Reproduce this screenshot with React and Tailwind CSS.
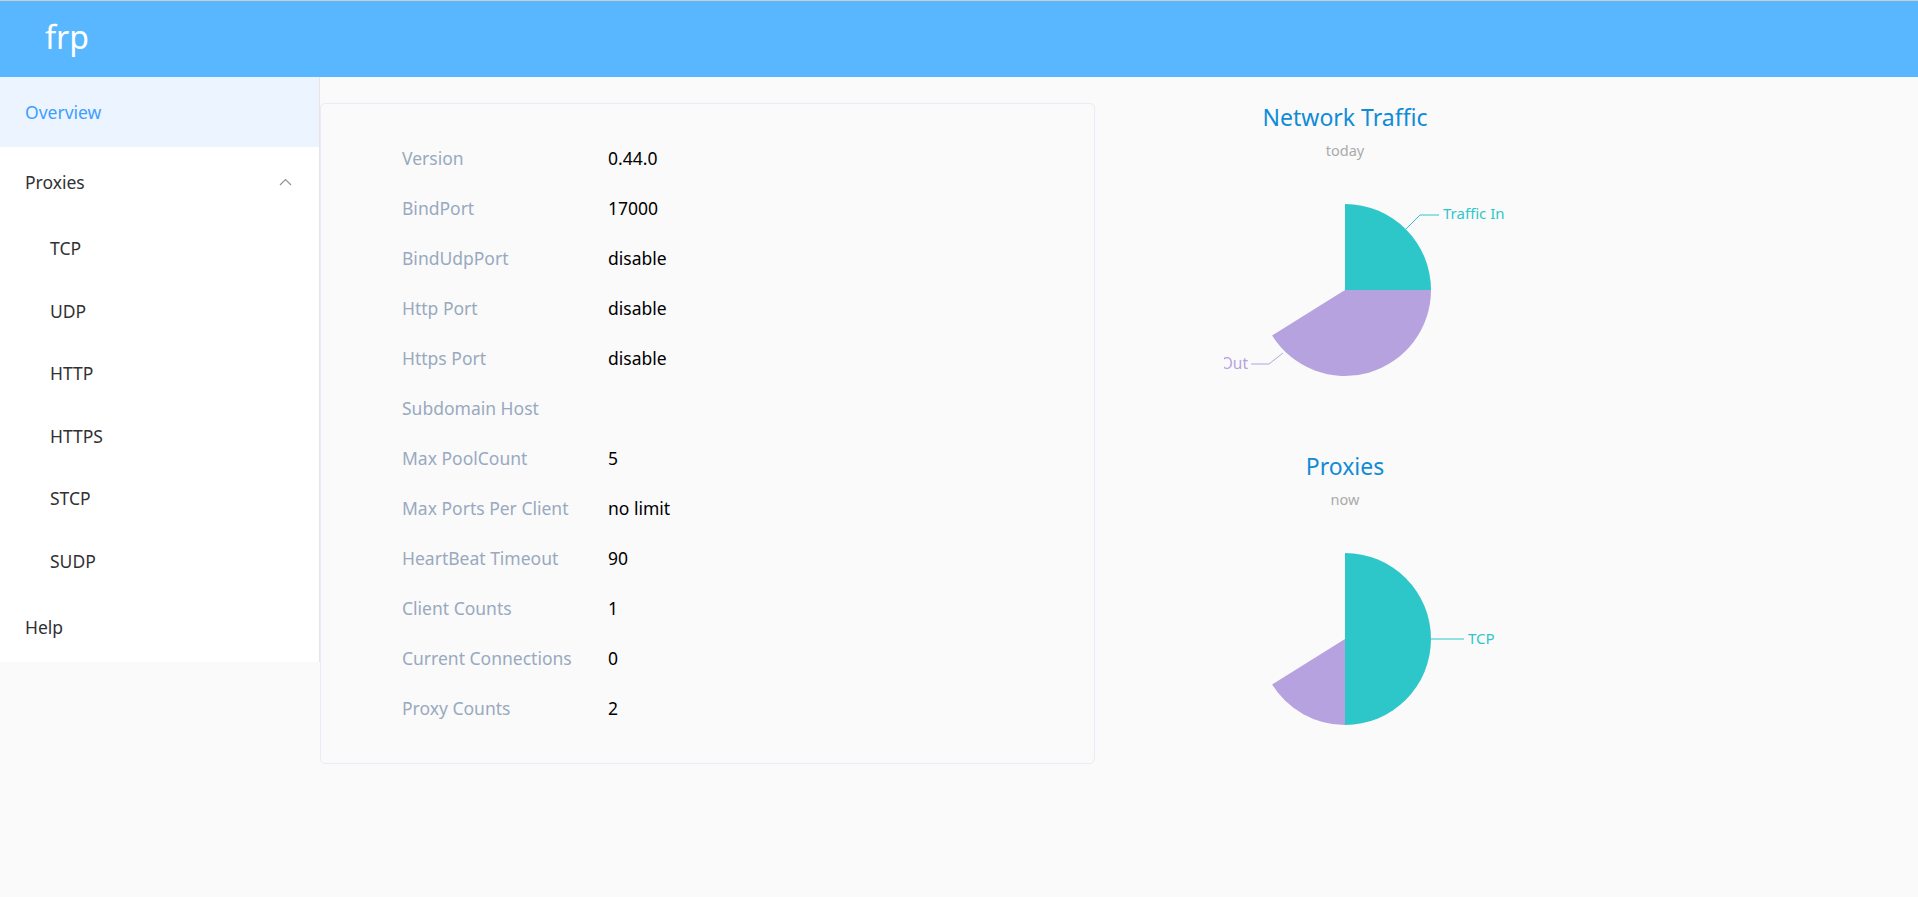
import React from 'react';

const font = "font-['Noto_Sans',sans-serif]";

// Sidebar menu
function Sidebar() {
    const subItems = ['TCP', 'UDP', 'HTTP', 'HTTPS', 'STCP', 'SUDP'];
    return (
        <aside className="w-[320px] shrink-0 self-start bg-white border-r border-[#e6e6e6] text-[17.5px] text-[#303133]">
            <div className="h-[70px] flex items-center pl-[25px] bg-[#ecf5ff] text-[#409eff]">Overview</div>
            <div className="h-[70px] flex items-center justify-between pl-[25px] pr-[27px]">
                <span>Proxies</span>
                <svg width="13" height="8" viewBox="0 0 13 8">
                    <polyline points="1,7 6.5,1.5 12,7" fill="none" stroke="#909399" strokeWidth="1.2" />
                </svg>
            </div>
            {subItems.map((name) => (
                <div key={name} className="h-[62.5px] flex items-center pl-[50px]">{name}</div>
            ))}
            <div className="h-[70px] flex items-center pl-[25px]">Help</div>
        </aside>
    );
}

// Server info card
function InfoCard() {
    const rows = [
        ['Version', '0.44.0'],
        ['BindPort', '17000'],
        ['BindUdpPort', 'disable'],
        ['Http Port', 'disable'],
        ['Https Port', 'disable'],
        ['Subdomain Host', ''],
        ['Max PoolCount', '5'],
        ['Max Ports Per Client', 'no limit'],
        ['HeartBeat Timeout', '90'],
        ['Client Counts', '1'],
        ['Current Connections', '0'],
        ['Proxy Counts', '2'],
    ];
    return (
        <div className="mt-[26px] w-[775px] h-[661px] shrink-0 border border-[#e9ebf7] rounded-[5px] bg-[#fafafa] pt-[29px]">
            {rows.map(([label, value]) => (
                <div key={label} className="h-[50px] flex items-center text-[17.5px]">
                    <div className="w-[287px] pl-[81px] text-[#99a9bf]">{label}</div>
                    <div className="text-black">{value}</div>
                </div>
            ))}
        </div>
    );
}

// Pie chart block
function ChartBlock({ title, sub, children, className }) {
    return (
        <div className={`flex flex-col items-center ${className}`}>
            <div className="text-[23px] leading-[32px] text-[#108cd6]">{title}</div>
            <div className="mt-[7px] text-[14.5px] leading-[20px] text-[#aaaaaa]">{sub}</div>
            <div className="self-start ml-[129px]">{children}</div>
        </div>
    );
}

export default function App() {
    return (
        <div className={`min-h-screen bg-[#fafafa] ${font}`}>
            <header className="h-[77px] bg-[#58b7ff] border-t border-[#cccccc] flex items-center pl-[45px]">
                <span className="text-[32px] text-white leading-none pb-[4px]">frp</span>
            </header>
            <div className="flex">
                <Sidebar />
                <InfoCard />
                <div className="w-[500px] shrink-0">
                    <ChartBlock title="Network Traffic" sub="today" className="pt-[24px]">
                        <svg width="320" height="260" viewBox="0 0 320 260">
                            <path d="M121,130 L121,44 A86,86 0 0 1 207,130 Z" fill="#2ec7c9" />
                            <path d="M121,130 L207,130 A86,86 0 0 1 48.1,175.6 Z" fill="#b6a2de" />
                            <polyline points="182,69 196,55 215,55" fill="none" stroke="#2ec7c9" strokeWidth="1" />
                            <text x="219" y="59" fontSize="15" fill="#2ec7c9">Traffic In</text>
                            <polyline points="59,193 45,204 27,204" fill="none" stroke="#b6a2de" strokeWidth="1" />
                            <text x="24" y="209" fontSize="15.5" fill="#b6a2de" textAnchor="end">Out</text>
                        </svg>
                    </ChartBlock>
                    <ChartBlock title="Proxies" sub="now" className="mt-[30px]">
                        <svg width="320" height="262" viewBox="0 0 320 262">
                            <path d="M121,130 L121,44 A86,86 0 0 1 121,216 Z" fill="#2ec7c9" />
                            <path d="M121,130 L121,216 A86,86 0 0 1 48.1,175.6 Z" fill="#b6a2de" />
                            <line x1="207" y1="130" x2="240" y2="130" stroke="#2ec7c9" strokeWidth="1" />
                            <text x="244" y="135" fontSize="15" fill="#2ec7c9">TCP</text>
                        </svg>
                    </ChartBlock>
                </div>
            </div>
        </div>
    );
}
